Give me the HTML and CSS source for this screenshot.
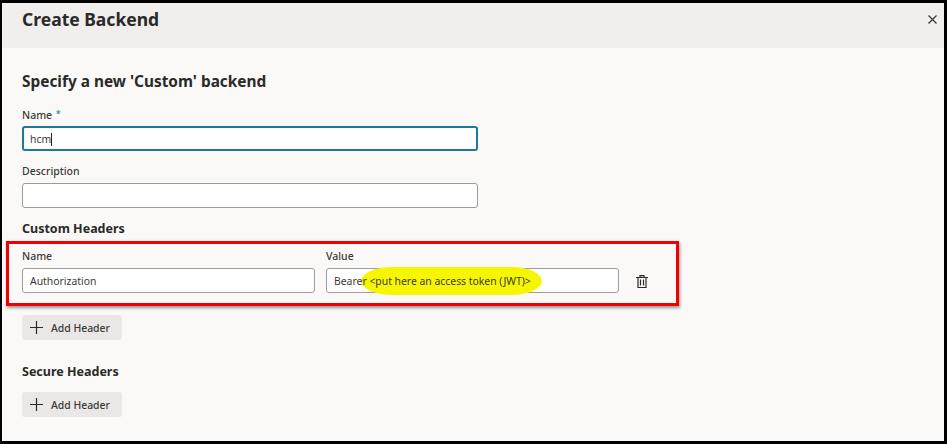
FILE: index.html
```html
<!DOCTYPE html>
<html lang="en">
<head>
    <meta charset="UTF-8">
    <title>Create Backend</title>
    <link rel="stylesheet" href="styles.css">
</head>
<body>
<div class="dialog">
    <div class="dialog-header">
        <h1>Create Backend</h1>
        <svg class="close-icon" width="9" height="9" viewBox="0 0 9 9"><path d="M.5.5l8 8M8.5.5l-8 8" stroke="#3a3937" stroke-width="1.3" fill="none"/></svg>
    </div>
    <div class="dialog-body">
        <h2>Specify a new 'Custom' backend</h2>

        <div class="label name-label">Name <span class="required">*</span></div>
        <div class="field wide focused">hcm<span class="caret"></span></div>

        <div class="label desc-label">Description</div>
        <div class="field wide"></div>

        <h3 class="custom-title">Custom Headers</h3>

        <!-- red annotation round the header row -->
        <div class="header-row">
            <div class="col">
                <div class="label">Name</div>
                <div class="field">Authorization</div>
            </div>
            <div class="col">
                <div class="label">Value</div>
                <div class="field value-field">
                    <span class="marker"></span>
                    <span class="field-text">Bearer &lt;put here an access token (JWT)&gt;</span>
                </div>
            </div>
            <svg class="trash-icon" width="12" height="13" viewBox="0 0 12 13" fill="none" stroke="#2b2a28" stroke-width="1.2">
                <path d="M0 2.500h12M4 2.500V.6h4v1.900M2 2.500v10h8v-10"/>
                <path d="M4.500 4.500v6M7.500 4.500v6"/>
            </svg>
        </div>

        <button class="add-btn first-add">
            <svg width="13" height="13" viewBox="0 0 13 13"><path d="M6.500 0v13M0 6.500h13" stroke="#2b2a28" stroke-width="1.2" fill="none"/></svg>
            Add Header
        </button>

        <h3 class="secure-title">Secure Headers</h3>
        <button class="add-btn">
            <svg width="13" height="13" viewBox="0 0 13 13"><path d="M6.500 0v13M0 6.500h13" stroke="#2b2a28" stroke-width="1.2" fill="none"/></svg>
            Add Header
        </button>
    </div>
</div>
</body>
</html>
```
FILE: styles.css
```css
html, body {
    margin: 0;
    height: 100%;
    background: #000;
}
body {
    font-family: "Noto Sans", Arial, sans-serif;
    color: #2b2a28;
}
.dialog {
    box-sizing: border-box;
    height: 444px;
    border-style: solid;
    border-color: #000;
    border-width: 3px 3px 3px 2px;
    background: #faf9f7;
    overflow: hidden;
}
.dialog-header {
    height: 45px;
    background: #f0efed;
    display: flex;
    justify-content: space-between;
    padding: 0 7px 0 20px;
}
h1 {
    margin: 5px 0 0;
    font-size: 17.500px;
    line-height: 22px;
    font-weight: 700;
}
.close-icon {
    margin-top: 12px;
}
.dialog-body {
    padding: 0 20px;
}
h2 {
    margin: 23px 0 0;
    height: 22px;
    font-size: 15.400px;
    line-height: 22px;
    font-weight: 700;
}
h3 {
    margin: 0;
    font-size: 12.500px;
    line-height: 18px;
    font-weight: 700;
}
.label {
    font-size: 10.500px;
    line-height: 15px;
    font-weight: 500;
    color: #3a3937;
}
.name-label {
    margin-top: 13px;
}
.desc-label {
    margin-top: 13px;
}
.required {
    color: #227e9e;
    font-size: 9px;
    vertical-align: 2px;
    margin-left: 1px;
}
.field {
    box-sizing: border-box;
    position: relative;
    height: 25px;
    margin-top: 4px;
    padding: 0 7px;
    background: #fff;
    border: 1px solid #9e9c98;
    border-radius: 3px;
    font-size: 10.400px;
    line-height: 25px;
    color: #3a3937;
}
.wide {
    width: 456px;
}
.focused {
    border: 2px solid #1f7a99;
    margin-top: 3px;
    padding: 0 6px;
    line-height: 23px;
}
.caret {
    display: inline-block;
    width: 1px;
    height: 13px;
    background: #222;
    vertical-align: -3px;
}
.custom-title {
    margin-top: 12px;
}
.header-row {
    box-sizing: border-box;
    width: 673px;
    height: 65px;
    margin: 3px 0 0 -16px;
    padding: 5px 0 0 13px;
    border: 3px solid #f00000;
    box-shadow: 1px 2px 3px rgba(0, 0, 0, .4);
    display: flex;
    align-items: flex-start;
    gap: 11px;
}
.col {
    width: 293px;
}
.value-field {
    overflow: visible;
}
.field-text {
    position: relative;
}
/* yellow marker stroke, drawn over the edge of the input */
.marker {
    position: absolute;
    left: 34px;
    top: -2px;
    width: 181px;
    height: 28px;
    border-radius: 34px / 15px;
    background: #f6f600;
}
.trash-icon {
    margin: 26px 0 0 6px;
}
.add-btn {
    display: flex;
    align-items: center;
    gap: 8px;
    width: 100px;
    height: 25px;
    padding: 0 0 0 8px;
    background: #e9e8e6;
    border: none;
    border-radius: 3px;
    font-family: inherit;
    font-size: 10.400px;
    font-weight: 500;
    color: #3a3937;
}
.first-add {
    margin-top: 9px;
}
.secure-title {
    margin-top: 23px;
    margin-bottom: 11px;
}
```
